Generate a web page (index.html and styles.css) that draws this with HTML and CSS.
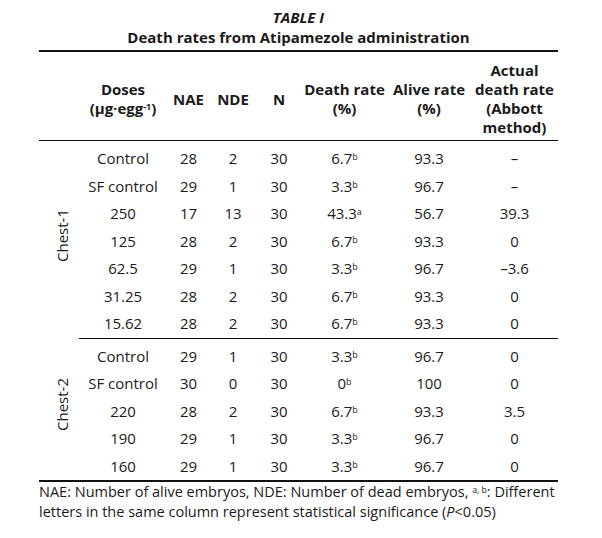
FILE: index.html
```html
<!DOCTYPE html>
<html>
<head>
<meta charset="utf-8">
<link rel="stylesheet" href="styles.css">
</head>
<body>
<div class="wrap">
  <div class="title">
    <div class="t1">TABLE I</div>
    <div class="t2">Death rates from Atipamezole administration</div>
  </div>
  <table class="tbl">
    <colgroup>
      <col class="c-grp"><col class="c-dose"><col class="c-nae"><col class="c-nde"><col class="c-n"><col class="c-dr"><col class="c-ar"><col class="c-ad">
    </colgroup>
    <thead>
      <tr>
        <th></th>
        <th>Doses<br>(µg·egg<sup class="s">-1</sup>)</th>
        <th>NAE</th>
        <th>NDE</th>
        <th>N</th>
        <th>Death rate<br>(%)</th>
        <th>Alive rate<br>(%)</th>
        <th>Actual<br>death rate<br>(Abbott<br>method)</th>
      </tr>
    </thead>
    <tbody class="grp">
      <tr class="first">
        <td class="glabel" rowspan="7"><span class="rot">Chest-1</span></td>
        <td>Control</td><td>28</td><td>2</td><td>30</td><td>6.7<sup class="s">b</sup></td><td>93.3</td><td>–</td>
      </tr>
      <tr><td>SF control</td><td>29</td><td>1</td><td>30</td><td>3.3<sup class="s">b</sup></td><td>96.7</td><td>–</td></tr>
      <tr><td>250</td><td>17</td><td>13</td><td>30</td><td>43.3<sup class="s">a</sup></td><td>56.7</td><td>39.3</td></tr>
      <tr><td>125</td><td>28</td><td>2</td><td>30</td><td>6.7<sup class="s">b</sup></td><td>93.3</td><td>0</td></tr>
      <tr><td>62.5</td><td>29</td><td>1</td><td>30</td><td>3.3<sup class="s">b</sup></td><td>96.7</td><td>–3.6</td></tr>
      <tr><td>31.25</td><td>28</td><td>2</td><td>30</td><td>6.7<sup class="s">b</sup></td><td>93.3</td><td>0</td></tr>
      <tr class="last"><td>15.62</td><td>28</td><td>2</td><td>30</td><td>6.7<sup class="s">b</sup></td><td>93.3</td><td>0</td></tr>
    </tbody>
    <tbody class="grp">
      <tr class="first">
        <td class="glabel" rowspan="5"><span class="rot">Chest-2</span></td>
        <td>Control</td><td>29</td><td>1</td><td>30</td><td>3.3<sup class="s">b</sup></td><td>96.7</td><td>0</td>
      </tr>
      <tr><td>SF control</td><td>30</td><td>0</td><td>30</td><td>0<sup class="s">b</sup></td><td>100</td><td>0</td></tr>
      <tr><td>220</td><td>28</td><td>2</td><td>30</td><td>6.7<sup class="s">b</sup></td><td>93.3</td><td>3.5</td></tr>
      <tr><td>190</td><td>29</td><td>1</td><td>30</td><td>3.3<sup class="s">b</sup></td><td>96.7</td><td>0</td></tr>
      <tr><td>160</td><td>29</td><td>1</td><td>30</td><td>3.3<sup class="s">b</sup></td><td>96.7</td><td>0</td></tr>
    </tbody>
  </table>
  <p class="note">NAE: Number of alive embryos, NDE: Number of dead embryos, <sup class="s">a, b</sup>: Different<br>letters in the same column represent statistical significance (<i>P</i>&lt;0.05)</p>
</div>
</body>
</html>
```
FILE: styles.css
```css
html, body {
  margin: 0;
  padding: 0;
  background: #ffffff;
}
body {
  font-family: "Open Sans", "Noto Sans", "Liberation Sans", sans-serif;
  font-size: 15px;
  color: #1c1a1a;
}
.wrap {
  width: 519px;
  margin-left: 39px;
}
.title {
  padding-top: 7px;
  padding-bottom: 3px;
  text-align: center;
  font-weight: 700;
  line-height: 20px;
}
.t1 {
  font-style: italic;
}
.tbl {
  width: 519px;
  table-layout: fixed;
  border-collapse: collapse;
  border-top: 2px solid #111;
  border-bottom: 2px solid #111;
}
.c-grp { width: 40px; }
.c-dose { width: 88px; }
.c-nae { width: 43px; }
.c-nde { width: 46px; }
.c-n { width: 46px; }
.c-dr { width: 85px; }
.c-ar { width: 84px; }
.c-ad { width: 87px; }
.tbl th {
  font-weight: 700;
  text-align: center;
  vertical-align: middle;
  line-height: 19px;
  padding: 9px 0 3px;
  white-space: nowrap;
  border-bottom: 1px solid #111;
}
.tbl td {
  text-align: center;
  vertical-align: middle;
  line-height: 27.5px;
  padding: 0;
  white-space: nowrap;
}
.grp .first td {
  padding-top: 4px;
}
.grp .first td.glabel {
  padding-top: 0;
}
.grp .last td {
  border-bottom: 1px solid #111;
}
.glabel {
  text-align: center;
}
.rot {
  display: inline-block;
  writing-mode: vertical-rl;
  transform: rotate(180deg);
  line-height: 20px;
  margin-left: 6px;
}
.s {
  font-size: 0.6em;
  line-height: 0;
  vertical-align: 0.5em;
}
.note {
  margin: 0;
  font-size: 14.5px;
  line-height: 20px;
  white-space: nowrap;
}
```
